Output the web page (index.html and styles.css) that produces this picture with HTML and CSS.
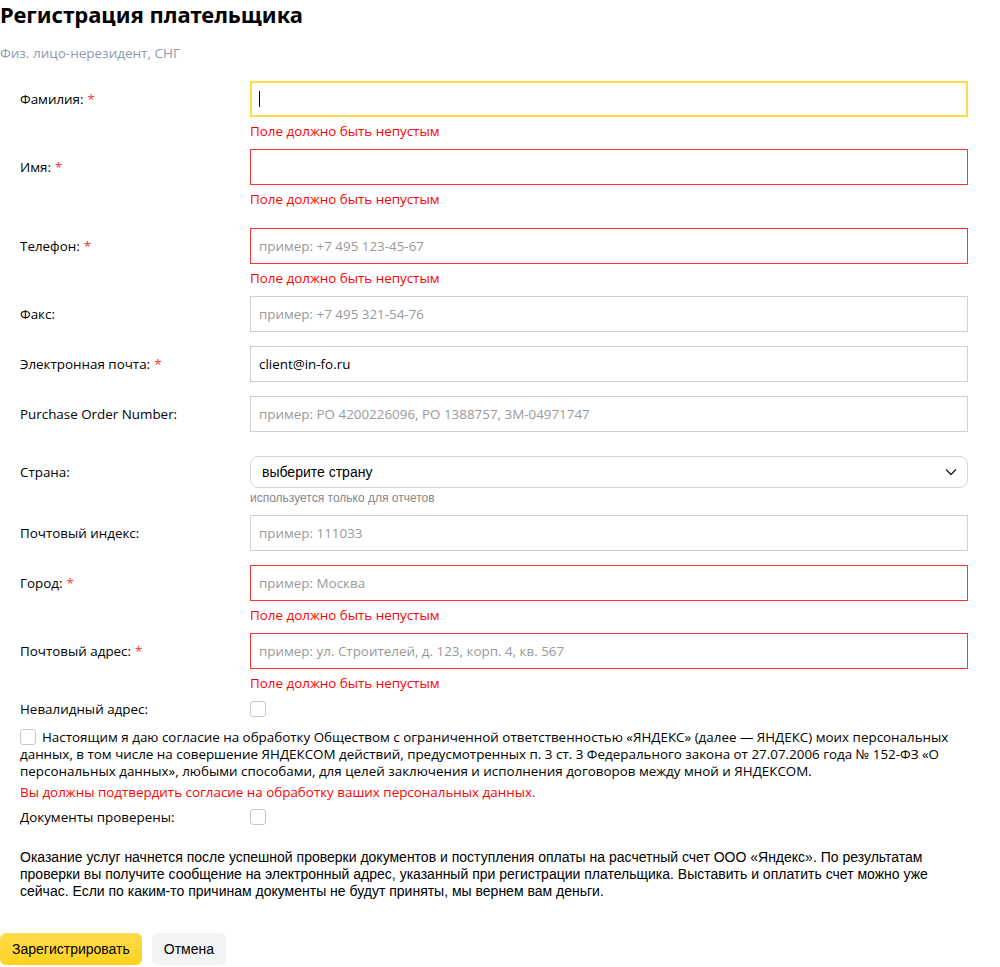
FILE: index.html
```html
<!DOCTYPE html>
<html lang="ru">
<head>
<meta charset="utf-8">
<title>Регистрация плательщика</title>
<link rel="stylesheet" href="styles.css">
</head>
<body>
<div class="page">
  <h1 class="title">Регистрация плательщика</h1>
  <div class="subtitle">Физ. лицо-нерезидент, СНГ</div>

  <form class="form">
    <div class="row has-error">
      <label class="label">Фамилия: <span class="req">*</span></label>
      <div class="field">
        <div class="input focus"><span class="caret"></span></div>
        <div class="error">Поле должно быть непустым</div>
      </div>
    </div>
    <div class="row has-error extra">
      <label class="label">Имя: <span class="req">*</span></label>
      <div class="field">
        <div class="input invalid"></div>
        <div class="error">Поле должно быть непустым</div>
      </div>
    </div>
    <div class="row has-error">
      <label class="label">Телефон: <span class="req">*</span></label>
      <div class="field">
        <div class="input invalid"><span class="ph">пример: +7 495 123-45-67</span></div>
        <div class="error">Поле должно быть непустым</div>
      </div>
    </div>
    <div class="row">
      <label class="label">Факс:</label>
      <div class="field">
        <div class="input"><span class="ph">пример: +7 495 321-54-76</span></div>
      </div>
    </div>
    <div class="row">
      <label class="label">Электронная почта: <span class="req">*</span></label>
      <div class="field">
        <div class="input"><span class="val">client@in-fo.ru</span></div>
      </div>
    </div>
    <div class="row before-select">
      <label class="label">Purchase Order Number:</label>
      <div class="field">
        <div class="input"><span class="ph">пример: PO 4200226096, PO 1388757, 3M-04971747</span></div>
      </div>
    </div>
    <div class="row select-row">
      <label class="label label-select">Страна:</label>
      <div class="field">
        <div class="select">
          <span class="select-text">выберите страну</span>
          <svg class="chevron" width="12" height="8" viewBox="0 0 12 8"><path d="M1 1.5l5 5 5-5" fill="none" stroke="#222" stroke-width="1.3"/></svg>
        </div>
        <div class="hint">используется только для отчетов</div>
      </div>
    </div>
    <div class="row">
      <label class="label">Почтовый индекс:</label>
      <div class="field">
        <div class="input"><span class="ph">пример: 111033</span></div>
      </div>
    </div>
    <div class="row has-error">
      <label class="label">Город: <span class="req">*</span></label>
      <div class="field">
        <div class="input invalid"><span class="ph">пример: Москва</span></div>
        <div class="error">Поле должно быть непустым</div>
      </div>
    </div>
    <div class="row has-error">
      <label class="label">Почтовый адрес: <span class="req">*</span></label>
      <div class="field">
        <div class="input invalid"><span class="ph">пример: ул. Строителей, д. 123, корп. 4, кв. 567</span></div>
        <div class="error">Поле должно быть непустым</div>
      </div>
    </div>
    <div class="row check-row">
      <label class="label">Невалидный адрес:</label>
      <div class="field"><span class="checkbox"></span></div>
    </div>

    <p class="consent"><span class="checkbox inline"></span>Настоящим я даю согласие на обработку Обществом с ограниченной ответственностью «ЯНДЕКС» (далее — ЯНДЕКС) моих персональных данных, в том числе на совершение ЯНДЕКСОМ действий, предусмотренных п. 3 ст. 3 Федерального закона от 27.07.2006 года № 152-ФЗ «О персональных данных», любыми способами, для целей заключения и исполнения договоров между мной и ЯНДЕКСОМ.</p>
    <div class="consent-error">Вы должны подтвердить согласие на обработку ваших персональных данных.</div>

    <div class="row check-row">
      <label class="label">Документы проверены:</label>
      <div class="field"><span class="checkbox"></span></div>
    </div>

    <p class="note">Оказание услуг начнется после успешной проверки документов и поступления оплаты на расчетный счет ООО «Яндекс». По результатам проверки вы получите сообщение на электронный адрес, указанный при регистрации плательщика. Выставить и оплатить счет можно уже сейчас. Если по каким-то причинам документы не будут приняты, мы вернем вам деньги.</p>

    <div class="buttons">
      <button type="button" class="btn btn-primary">Зарегистрировать</button>
      <button type="button" class="btn btn-secondary">Отмена</button>
    </div>
  </form>
</div>
</body>
</html>
```

FILE: styles.css
```css
html, body {
  margin: 0;
  padding: 0;
  background: #fff;
}
body {
  font-family: "Open Sans", "Noto Sans", sans-serif;
  color: #000;
  font-size: 13.4px;
}
.page {
  width: 1000px;
}
.title {
  margin: 0;
  font-family: "Noto Sans", "Open Sans", sans-serif;
  font-size: 22px;
  font-weight: 700;
  line-height: 28px;
  color: #000;
}
.subtitle {
  margin-top: 15px;
  font-size: 13.5px;
  line-height: 20px;
  color: #8e98ae;
}
.form {
  margin-top: 18px;
}
.row {
  display: grid;
  grid-template-columns: 230px 718px;
  padding-left: 20px;
  margin-bottom: 14px;
}
.row.has-error {
  margin-bottom: 10px;
}
.row.extra {
  margin-bottom: 21px;
}
.row.before-select {
  margin-bottom: 24px;
}
.row.select-row {
  margin-bottom: 10px;
}
.label {
  display: flex;
  align-items: center;
  height: 36px;
  color: #000;
  gap: 4px;
}
.label-select {
  height: 32px;
}
.req {
  color: #f33;
}
.field {
  display: flex;
  flex-direction: column;
}
.input {
  box-sizing: border-box;
  height: 36px;
  border: 1px solid #d0d0d0;
  display: flex;
  align-items: center;
  padding: 0 8px;
}
.input.focus {
  border: 2px solid #ffdb4d;
  padding: 0 7px;
}
.input.invalid {
  border-color: #f33;
}
.caret {
  display: inline-block;
  width: 1px;
  height: 16px;
  background: #000;
}
.ph {
  color: #999;
}
.val {
  color: #000;
}
.error {
  margin-top: 6px;
  line-height: 16px;
  color: #f00;
}
.select {
  box-sizing: border-box;
  height: 32px;
  border: 1px solid #d6d6d6;
  border-radius: 8px;
  display: flex;
  align-items: center;
  justify-content: space-between;
  padding: 0 10px 0 11px;
  font-family: "Liberation Sans", Arial, sans-serif;
  font-size: 14px;
}
.chevron {
  display: block;
}
.hint {
  margin-top: 3px;
  font-family: "Liberation Sans", Arial, sans-serif;
  font-size: 12px;
  line-height: 14px;
  color: #888;
}
.check-row .label {
  height: 16px;
}
.check-row .field {
  justify-content: center;
}
.check-row {
  margin-bottom: 12px;
}
.checkbox {
  display: inline-block;
  box-sizing: border-box;
  width: 16px;
  height: 16px;
  border: 1px solid #c8c8c8;
  border-radius: 3px;
  background: #fff;
}
.checkbox.inline {
  vertical-align: -3px;
  margin-right: 6px;
}
.consent {
  margin: 0;
  padding: 0 32px 0 20px;
  line-height: 17px;
}
.consent-error {
  margin-top: 4px;
  padding-left: 20px;
  line-height: 17px;
  color: #f00;
  margin-bottom: 8px;
}
.note {
  margin: 24px 0 0;
  padding: 0 50px 0 20px;
  font-family: "Liberation Sans", Arial, sans-serif;
  font-size: 14px;
  line-height: 17px;
}
.buttons {
  display: flex;
  gap: 10px;
  margin-top: 33px;
}
.btn {
  height: 32px;
  border: 0;
  border-radius: 6px;
  padding: 0 12px;
  font-family: "Liberation Sans", Arial, sans-serif;
  font-size: 14px;
  color: #000;
}
.btn-primary {
  background: linear-gradient(#ffdb4d, #ffd21f);
}
.btn-secondary {
  background: #f2f3f5;
}
```
